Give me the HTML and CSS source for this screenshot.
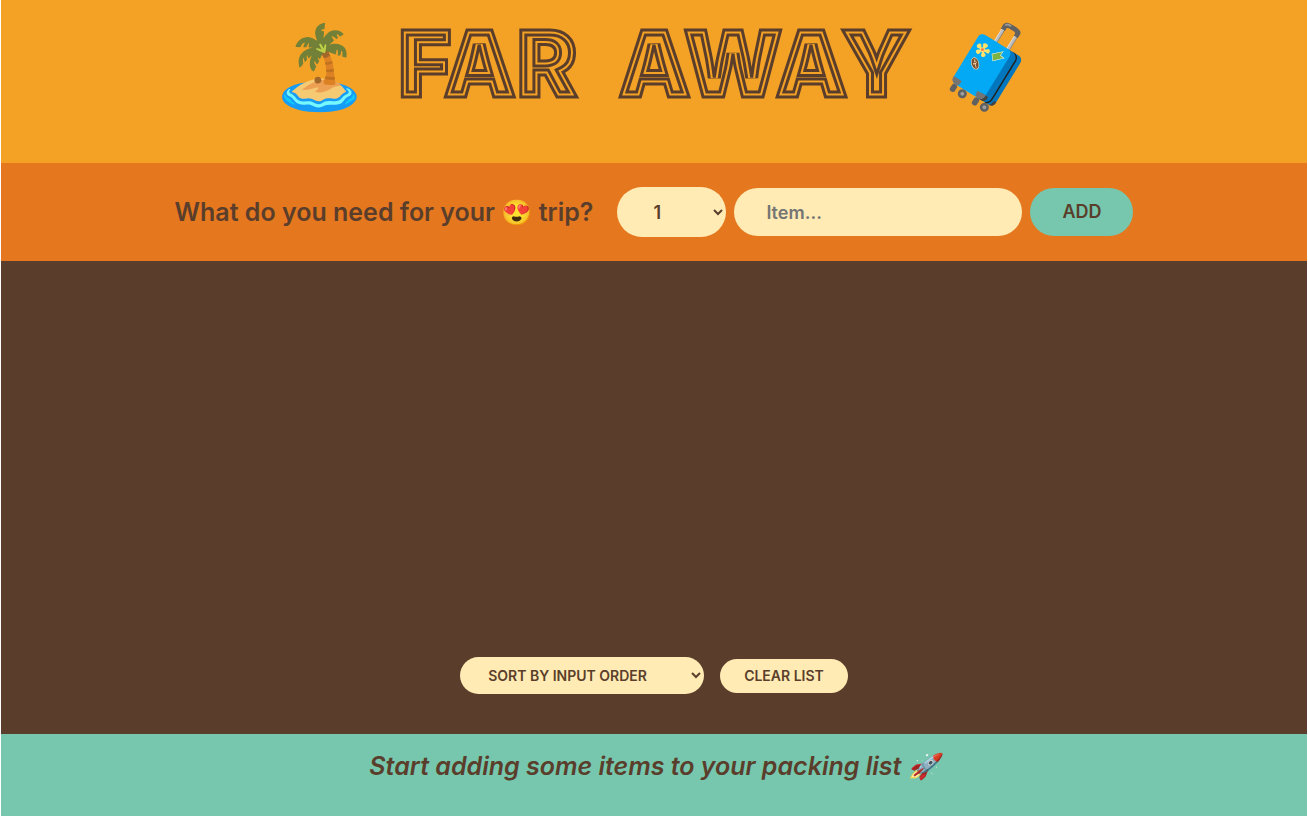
FILE: index.html
```html
<!DOCTYPE html>
<html lang="en">
<head>
<meta charset="utf-8">
<title>Far Away</title>
<link rel="stylesheet" href="styles.css">
</head>
<body>
<div class="app">
  <header class="header">
    <h1 class="logo">
      <span class="logo-emoji">🏝️</span>
      <svg class="logo-word" viewBox="0 0 520 116" role="img" aria-label="Far Away">
        <defs>
          <clipPath id="word-clip"><text class="word" x="4" y="89">FAR <tspan x="224">AWAY</tspan></text></clipPath>
        </defs>
        <g clip-path="url(#word-clip)"><text class="word line-inner" x="4" y="89">FAR <tspan x="224">AWAY</tspan></text></g>
        <text class="word line-gap" x="4" y="89" aria-hidden="true">FAR <tspan x="224">AWAY</tspan></text>
        <text class="word line-outer" x="4" y="89" aria-hidden="true">FAR <tspan x="224">AWAY</tspan></text>
      </svg>
      <span class="logo-emoji">🧳</span>
    </h1>
  </header>
  <form class="add-form">
    <label class="question" for="item">What do you need for your 😍 trip?</label>
    <select class="control quantity" aria-label="Quantity">
      <option>1</option><option>2</option><option>3</option><option>4</option><option>5</option><option>20</option>
    </select>
    <input class="control item" id="item" type="text" placeholder="Item...">
    <button class="control add" type="button">ADD</button>
  </form>
  <main class="list">
    <div class="actions">
      <select class="control small sort" aria-label="Sort">
        <option>SORT BY INPUT ORDER</option>
        <option>SORT BY DESCRIPTION</option>
        <option>SORT BY PACKED STATUS</option>
      </select>
      <button class="control small" type="button">CLEAR LIST</button>
    </div>
  </main>
  <footer class="stats"><em>Start adding some items to your packing list 🚀</em></footer>
</div>
</body>
</html>
```
FILE: styles.css
```css
* { box-sizing: border-box; margin: 0; padding: 0; }
body {
  background: #fff;
  color: #5a3e2b;
  font-family: Inter, "Noto Sans", sans-serif;
  font-weight: 600;
}
.app {
  min-height: 100vh;
  margin: 0 1px;
  display: grid;
  grid-template-rows: auto auto 1fr auto;
}
.header { background: #f4a226; padding: 8px 0 39px; }
.logo {
  display: flex;
  justify-content: center;
  align-items: center;
  gap: 24px;
  line-height: 96px;
  font-weight: 400;
}
.logo-emoji { font-size: 81px; }
.logo-word { width: 520px; height: 116px; }
.word { font-family: Inter, sans-serif; font-size: 92px; font-weight: 900; fill: none; }
.line-inner { stroke: #5a3e2b; stroke-width: 13; }
.line-gap { stroke: #f4a226; stroke-width: 7; }
.line-outer { stroke: #5a3e2b; stroke-width: 3; }
.add-form {
  background: #e5771f;
  padding: 24px 0;
  display: flex;
  justify-content: center;
  align-items: center;
  gap: 8px;
}
.question { font-size: 25px; line-height: 32px; margin-right: 16px; }
.control {
  border: none;
  border-radius: 100px;
  background-color: #ffebb3;
  color: #5a3e2b;
  font-family: inherit;
  font-size: 18px;
  font-weight: 600;
  line-height: 24px;
  padding: 12px 32px;
}
.quantity { width: 109px; height: 50px; }
.item { width: 288px; height: 48px; }
.item::placeholder { color: #757575; }
.add { background-color: #76c7ad; height: 48px; }
.list {
  background: #5a3e2b;
  padding: 40px 32px;
  display: flex;
  align-items: flex-end;
  justify-content: center;
}
.actions { display: flex; align-items: center; gap: 16px; }
.small { font-size: 14px; line-height: 18px; padding: 8px 24px; }
.sort { width: 244px; height: 37px; }
.stats {
  background: #76c7ad;
  padding: 16px 0 34px;
  text-align: center;
  font-size: 25px;
  line-height: 32px;
}
```
